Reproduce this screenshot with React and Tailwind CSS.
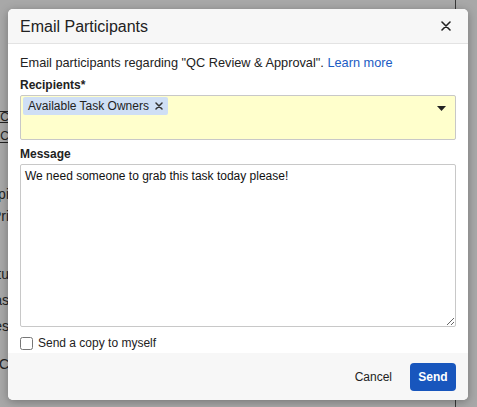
import React, { useState } from 'react';

// Fragments of the page that sit behind the modal overlay
const BackgroundPage = () => (
  <div className="absolute inset-0 bg-white text-[14px] text-[#333]">
    <div className="absolute top-0 bottom-0 left-[455px] border-l border-[#555]" />
    <div className="flex flex-col w-[9px] overflow-hidden pt-[111px]">
      <div className="flex justify-end whitespace-nowrap border-y border-[#333] h-[12px] leading-[11px] text-[12px]">QC</div>
      <div className="flex justify-end whitespace-nowrap border-b border-[#333] h-[12px] leading-[11px] text-[12px] mt-[8px]">QC</div>
      <div className="flex justify-end whitespace-nowrap mt-[42px] leading-[18px]">Topi</div>
      <div className="flex justify-end whitespace-nowrap mt-[4px] leading-[18px]">Pri</div>
      <div className="flex justify-end whitespace-nowrap mt-[40px] leading-[18px]">Statu</div>
      <div className="flex justify-end whitespace-nowrap mt-[8px] leading-[18px]">Tas</div>
      <div className="flex justify-end whitespace-nowrap mt-[8px] leading-[18px]">Dues</div>
      <div className="flex justify-end whitespace-nowrap mt-[20px] leading-[18px]">QC</div>
    </div>
  </div>
);

const App = () => {
  const [message, setMessage] = useState('We need someone to grab this task today please!');
  const [copy, setCopy] = useState(false);

  return (
    <div
      className="relative w-[477px] h-[407px] overflow-hidden"
      style={{ fontFamily: '"Liberation Sans", Arial, sans-serif' }}
    >
      <BackgroundPage />
      <div className="absolute inset-0 bg-black/[0.34]" />

      <div className="absolute left-[8px] top-[9px] w-[460px] bg-white rounded-[5px] shadow-[0_2px_10px_rgba(0,0,0,0.3)] overflow-hidden">
        {/* header */}
        <div className="flex items-center justify-between h-[35px] pl-[12px] pr-[17px] bg-[#f7f7f7] border-b border-[#e3e3e3]">
          <h2 className="text-[16px] text-[#222] leading-none pt-[1px]">Email Participants</h2>
          <button className="text-[#222]" aria-label="Close">
            <svg width="10" height="10" viewBox="0 0 10 10" stroke="currentColor" strokeWidth="1.6" strokeLinecap="round">
              <path d="M1 1l8 8M9 1l-8 8" />
            </svg>
          </button>
        </div>

        {/* body */}
        <div className="px-[12px] pt-[10px] pb-[2px] text-[12px] text-[#222]">
          <p className="leading-[18px] text-[12.75px]">
            Email participants regarding "QC Review &amp; Approval".{' '}
            <a href="#" className="text-[#1a5bc4]">Learn more</a>
          </p>

          <label className="block font-bold leading-[18px] mt-[4px]">Recipients*</label>
          <div className="flex justify-between mt-[1px] h-[45px] bg-[#ffffcc] border border-[#c8c8c8] rounded-[2px] pl-[2px] pr-[9px] pt-[1px]">
            <div className="flex items-start">
              <span className="flex items-center gap-[6px] h-[18px] px-[5px] bg-[#cfdff5] rounded-[2px] text-[12px] leading-none">
                Available Task Owners
                <svg width="8" height="8" viewBox="0 0 8 8" stroke="#333" strokeWidth="1.5" strokeLinecap="round">
                  <path d="M1 1l6 6M7 1l-6 6" />
                </svg>
              </span>
            </div>
            <svg width="9" height="5" viewBox="0 0 9 5" className="mt-[9px]" fill="#222">
              <path d="M0 0h9L4.5 5z" />
            </svg>
          </div>

          <label className="block font-bold leading-[18px] mt-[5px]">Message</label>
          <textarea
            value={message}
            onChange={(e) => setMessage(e.target.value)}
            className="block w-full h-[163px] mt-[1px] border border-[#c8c8c8] rounded-[2px] px-[4px] py-[4px] text-[12px] leading-[15px] text-[#111] outline-none resize-y"
          />

          <label className="flex items-center gap-[5px] mt-[8px] leading-[16px]">
            <input
              type="checkbox"
              checked={copy}
              onChange={(e) => setCopy(e.target.checked)}
              className="w-[13px] h-[13px] m-0"
            />
            Send a copy to myself
          </label>
        </div>

        {/* footer */}
        <div className="flex items-center justify-end gap-[18px] h-[47px] bg-[#f7f7f7] px-[12px]">
          <button className="text-[12px] text-[#222]">Cancel</button>
          <button className="h-[28px] w-[46px] bg-[#1856bd] text-white text-[12px] font-bold rounded-[4px]">
            Send
          </button>
        </div>
      </div>
    </div>
  );
};

export default App;
